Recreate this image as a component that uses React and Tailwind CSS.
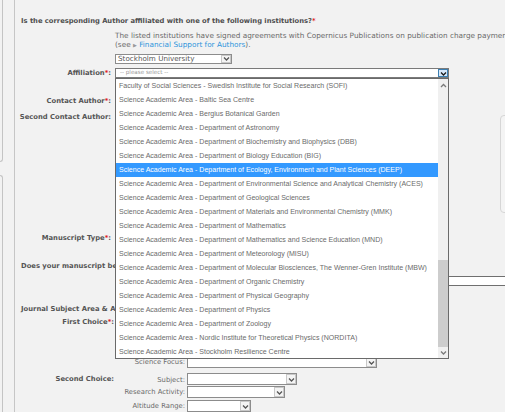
import React from "react";

const items = [
  "Faculty of Social Sciences - Swedish Institute for Social Research (SOFI)",
  "Science Academic Area - Baltic Sea Centre",
  "Science Academic Area - Bergius Botanical Garden",
  "Science Academic Area - Department of Astronomy",
  "Science Academic Area - Department of Biochemistry and Biophysics (DBB)",
  "Science Academic Area - Department of Biology Education (BIG)",
  "Science Academic Area - Department of Ecology, Environment and Plant Sciences (DEEP)",
  "Science Academic Area - Department of Environmental Science and Analytical Chemistry (ACES)",
  "Science Academic Area - Department of Geological Sciences",
  "Science Academic Area - Department of Materials and Environmental Chemistry (MMK)",
  "Science Academic Area - Department of Mathematics",
  "Science Academic Area - Department of Mathematics and Science Education (MND)",
  "Science Academic Area - Department of Meteorology (MISU)",
  "Science Academic Area - Department of Molecular Biosciences, The Wenner-Gren Institute (MBW)",
  "Science Academic Area - Department of Organic Chemistry",
  "Science Academic Area - Department of Physical Geography",
  "Science Academic Area - Department of Physics",
  "Science Academic Area - Department of Zoology",
  "Science Academic Area - Nordic Institute for Theoretical Physics (NORDITA)",
  "Science Academic Area - Stockholm Resilience Centre",
];

function Chevron({ up = false, className = "" }) {
  return (
    <svg width="7" height="5" viewBox="0 0 7 5" className={className}>
      <path
        d={up ? "M1 4 L3.5 1.5 L6 4" : "M1 1.5 L3.5 4 L6 1.5"}
        fill="none"
        stroke="currentColor"
        strokeWidth="1.3"
      />
    </svg>
  );
}

function Select({ width, text = "" }) {
  return (
    <div
      className="h-full flex items-stretch bg-white border border-[#8c8c8c]"
      style={{ width }}
    >
      <div className="flex-1 flex items-center pl-[2px] overflow-hidden whitespace-nowrap text-[#555] text-[7.2px] leading-none font-['DejaVu_Sans',sans-serif]">
        {text}
      </div>
      <div className="w-[10px] flex items-center justify-center border bg-[#f4f4f4] border-[#c8c8c8] text-[#555]">
        <Chevron />
      </div>
    </div>
  );
}

function Label({ children, req = false }) {
  return (
    <div className="text-right whitespace-nowrap text-[#555] font-bold text-[6.8px] leading-none font-['DejaVu_Sans',sans-serif]">
      {children}
      {req && <span className="text-[#e02020]">*</span>}
      {req && ":"}
    </div>
  );
}

export default function App() {
  return (
    <div className="w-[505px] h-[412px] overflow-hidden bg-[#f2f2f2] relative flex font-['DejaVu_Sans',sans-serif]">
      {/* left sidebar remnants */}
      <div className="w-[3px] flex flex-col shrink-0">
        <div className="h-[162px] border-r border-b border-[#c4c4c4] rounded-br-[3px]" />
        <div className="mt-[13px] flex-1 border-r border-t border-[#c4c4c4] rounded-tr-[3px]" />
      </div>

      {/* main panel */}
      <div className="ml-[11px] w-[520px] shrink-0 border-l border-[#c6c6c6] flex flex-col">
        {/* heading */}
        <div className="mt-[17px] h-[10px] pl-[6px] flex items-center whitespace-nowrap text-[#4f4f4f] font-bold text-[6.75px] leading-none">
          Is the corresponding Author affiliated with one of the following institutions?
          <span className="text-[#e02020]">*</span>
        </div>
        {/* description */}
        <div className="mt-[4px] pl-[100px] text-[#6a6a6a] text-[7.3px] leading-[9.5px] whitespace-nowrap">
          <div>
            The listed institutions have signed agreements with Copernicus Publications on publication charge payments
          </div>
          <div>
            (see <span className="text-[#999] text-[5px]">▶</span>{" "}
            <span className="text-[#2f95dc]">Financial Support for Authors</span>).
          </div>
        </div>
        {/* Stockholm select */}
        <div className="mt-[3px] h-[11px] pl-[100px]">
          <Select width="117px" text="Stockholm University" />
        </div>

        {/* Affiliation */}
        <div className="mt-[4px] h-[11px] grid grid-cols-[96px_1fr] gap-x-[4px] items-center">
          <Label req>Affiliation</Label>
          <div className="h-full">
            <div className="h-full w-[334px] flex items-stretch bg-white border border-[#7a7a7a]">
              <div className="flex-1 flex items-center pl-[4px] text-[#999] text-[5.6px] leading-none">
                -- please select --
              </div>
              <div className="w-[10px] flex items-center justify-center border border-[#3c7fb1] bg-[#d7e9fb] text-[#1a1a1a]">
                <Chevron />
              </div>
            </div>
          </div>
        </div>

        {/* Contact Author */}
        <div className="mt-[18px] h-[10px] grid grid-cols-[96px_1fr] gap-x-[4px] items-center">
          <Label req>Contact Author</Label>
          <div />
        </div>
        {/* Second Contact Author */}
        <div className="mt-[7px] h-[10px] grid grid-cols-[96px_1fr] gap-x-[4px] items-center">
          <Label>Second Contact Author:</Label>
          <div />
        </div>

        {/* Manuscript Type */}
        <div className="mt-[111px] h-[10px] grid grid-cols-[96px_1fr] gap-x-[4px] items-center">
          <Label req>Manuscript Type</Label>
          <div />
        </div>

        {/* Does your manuscript (clipped by dropdown) */}
        <div className="mt-[19px] h-[10px] w-[100px] pl-[6px] flex items-center overflow-hidden whitespace-nowrap text-[#555] font-bold text-[6.8px] leading-none">
          Does your manuscript be
        </div>
        <div className="mt-[4px] h-[11px] pl-[100px]">
          <div className="h-full w-[420px] bg-white border-y border-[#6f6f6f]" />
        </div>

        {/* Journal Subject Area */}
        <div className="mt-[19px] h-[10px] w-[100px] pl-[6px] flex items-center overflow-hidden whitespace-nowrap text-[#555] font-bold text-[6.8px] leading-none">
          Journal Subject Area &amp; A
        </div>
        <div className="mt-[3px] h-[10px] grid grid-cols-[99px_1fr] gap-x-[4px] items-center">
          <Label req>First Choice</Label>
          <div />
        </div>

        {/* Science Focus */}
        <div className="mt-[29px] h-[12px] grid grid-cols-[99px_66px_1fr] gap-x-[4px] items-center">
          <div />
          <div className="text-right text-[#6a6a6a] text-[6.8px] leading-none whitespace-nowrap -mr-[1px]">Science Focus:</div>
          <div className="h-[12px] -ml-[1px]">
            <Select width="190px" />
          </div>
        </div>
        <div className="mt-[5px] h-[12px] grid grid-cols-[99px_66px_1fr] gap-x-[4px] items-center">
          <Label>Second Choice:</Label>
          <div className="text-right text-[#6a6a6a] text-[6.8px] leading-none whitespace-nowrap -mr-[1px] pt-[2px]">Subject:</div>
          <div className="h-[12px] -ml-[1px]">
            <Select width="110px" />
          </div>
        </div>
        <div className="mt-[1px] h-[12px] grid grid-cols-[99px_66px_1fr] gap-x-[4px] items-center">
          <div />
          <div className="text-right text-[#6a6a6a] text-[6.8px] leading-none whitespace-nowrap -mr-[1px]">Research Activity:</div>
          <div className="h-[12px] -ml-[1px]">
            <Select width="98px" />
          </div>
        </div>
        <div className="mt-[2px] h-[12px] grid grid-cols-[99px_66px_1fr] gap-x-[4px] items-center">
          <div />
          <div className="text-right text-[#6a6a6a] text-[6.8px] leading-none whitespace-nowrap -mr-[1px]">Altitude Range:</div>
          <div className="h-[12px] -ml-[1px]">
            <Select width="64px" />
          </div>
        </div>
      </div>

      {/* right rounded box remnant */}
      <div className="absolute left-[500px] top-[115px] w-[20px] h-[98px] border border-[#d6d6d6] rounded-l-[4px] bg-[#f4f4f4]" />

      {/* open dropdown list */}
      <div className="absolute left-[115px] top-[78px] w-[334px] h-[281px] bg-white border border-[#6a6a6a] flex">
        <div className="flex-1 flex flex-col">
          {items.map((t, i) => (
            <div
              key={i}
              className={`h-[14px] shrink-0 flex items-center pl-[3px] whitespace-nowrap overflow-hidden text-[7.05px] leading-none font-['Liberation_Sans',Arial,sans-serif] ${
                i === 6 ? "bg-[#3399ff] text-white" : "text-[#6b6b6b]"
              }`}
            >
              {t}
            </div>
          ))}
        </div>
        <div className="w-[10px] bg-[#f0f0f0] flex flex-col items-center">
          <div className="h-[12px] flex items-center justify-center text-[#7a7a7a]">
            <Chevron up />
          </div>
          <div className="flex-1 w-full flex flex-col">
            <div className="h-[169px]" />
            <div className="h-[87px] w-full bg-[#cdcdcd]" />
          </div>
          <div className="h-[11px] flex items-center justify-center text-[#7a7a7a]">
            <Chevron />
          </div>
        </div>
      </div>
    </div>
  );
}
